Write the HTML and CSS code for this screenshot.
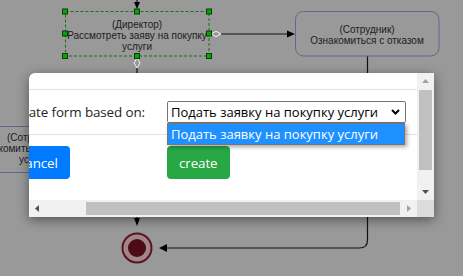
FILE: index.html
```html
<!DOCTYPE html>
<html lang="en">
<head>
    <meta charset="UTF-8">
    <title>Process editor</title>
    <link rel="stylesheet" href="styles.css">
</head>
<body>
    <svg class="diagram" width="463" height="276" viewBox="0 0 463 276">
        <g class="edges">
            <line x1="137" y1="0" x2="137" y2="4"/>
            <polygon class="head" points="134,2 140,2 137,9"/>

            <line x1="221" y1="34" x2="289" y2="34"/>
            <polygon class="hollow" points="211,34 216,31.3 221,34 216,36.7"/>
            <polygon class="head" points="287,30.5 295,34 287,37.5"/>

            <line x1="137" y1="68" x2="137" y2="73"/>
            <polygon class="hollow" points="137,58 140,63 137,68 134,63"/>

            <line x1="367.5" y1="56" x2="367.5" y2="73"/>
            <path d="M367.5 217 V240 Q367.5 248 359.5 248 H166"/>
            <polygon class="head" points="159,248 167,244 167,252"/>

            <line x1="137" y1="217" x2="137" y2="219"/>
            <polygon class="head" points="134,218 140,218 137,226"/>
        </g>

        <rect class="selected" x="65.5" y="11.5" width="143.5" height="44.5"/>
        <text class="label" x="137" y="27.5">(Директор)</text>
        <text class="label" x="137" y="38.5">Рассмотреть заяву на покупку</text>
        <text class="label" x="137" y="49.5">услуги</text>
        <g class="handles">
            <rect x="62.5" y="9" width="5" height="5"/>
            <rect x="134.5" y="9" width="5" height="5"/>
            <rect x="206.5" y="9" width="5" height="5"/>
            <rect x="62.5" y="31" width="5" height="5"/>
            <rect x="206.5" y="31" width="5" height="5"/>
            <rect x="62.5" y="53.5" width="5" height="5"/>
            <rect x="134.5" y="53.5" width="5" height="5"/>
            <rect x="206.5" y="53.5" width="5" height="5"/>
        </g>

        <rect class="task" x="295.5" y="11.5" width="143.5" height="44.5" rx="8"/>
        <text class="label" x="367" y="33">(Сотрудник)</text>
        <text class="label" x="367" y="44">Ознакомиться с отказом</text>

        <rect class="task" x="-60" y="126.5" width="130" height="46" rx="8"/>
        <text class="label start" x="7" y="141">(Сотрудник)</text>
        <text class="label start" x="-25" y="152">Ознакомиться с</text>
        <text class="label start" x="19" y="163">услуги</text>

        <circle class="end-ring" cx="137" cy="248" r="14.5"/>
        <circle class="end-dot" cx="137" cy="248" r="9"/>
    </svg>

    <div class="modal">
        <div class="modal-main">
            <div class="viewport">
                <div class="content">
                    <div class="modal-header"></div>
                    <div class="modal-body">
                        <div class="form-label"><label>Generate form based on:</label></div>
                        <div class="select-wrap">
                            <div class="select">
                                <span>Подать заявку на покупку услуги</span>
                                <svg class="chevron" width="9" height="6" viewBox="0 0 9 6">
                                    <path d="M1 1 L4.5 4.5 L8 1"/>
                                </svg>
                            </div>
                            <div class="dropdown">Подать заявку на покупку услуги</div>
                        </div>
                    </div>
                    <div class="modal-footer">
                        <button class="btn btn-cancel">cancel</button>
                        <button class="btn btn-create">create</button>
                    </div>
                </div>
            </div>
            <div class="vscroll">
                <svg class="arrow" width="17" height="17" viewBox="0 0 17 17"><polygon class="dim" points="5,10 12,10 8.5,6"/></svg>
                <div class="vtrack"><div class="vthumb"></div></div>
                <svg class="arrow" width="17" height="17" viewBox="0 0 17 17"><polygon points="5,7 12,7 8.5,11"/></svg>
            </div>
        </div>
        <div class="hscroll">
            <svg class="arrow" width="17" height="17" viewBox="0 0 17 17"><polygon points="10,5 10,12 6,8.5"/></svg>
            <div class="htrack"><div class="hthumb"></div></div>
            <svg class="arrow" width="17" height="17" viewBox="0 0 17 17"><polygon class="dim" points="7,5 7,12 11,8.5"/></svg>
            <div class="corner"></div>
        </div>
    </div>
</body>
</html>
```

FILE: styles.css
```css
body {
    margin: 0;
    width: 463px;
    height: 276px;
    overflow: hidden;
    background-color: #999999;
    font-family: "Open Sans", Arial, sans-serif;
}

.diagram {
    display: block;
}

.edges line,
.edges path {
    stroke: #111;
    stroke-width: 1.2;
    fill: none;
}

.edges .head {
    fill: #000;
}

.edges .hollow {
    fill: #999;
    stroke: #f2f2f2;
    stroke-width: 1;
}

.selected {
    fill: none;
    stroke: #1d6b1d;
    stroke-width: 1;
    stroke-dasharray: 3 2;
}

.task {
    fill: none;
    stroke: #5d6a88;
    stroke-width: 1;
}

.label {
    font-family: "Liberation Sans", Arial, sans-serif;
    font-size: 10px;
    fill: #1c1c1c;
    text-anchor: middle;
}

.label.start {
    text-anchor: start;
}

.handles rect {
    fill: #00a800;
    stroke: #0b3a0b;
    stroke-width: 1;
}

.end-ring {
    fill: #a0858b;
    stroke: #5a1322;
    stroke-width: 2;
}

.end-dot {
    fill: #4b0b17;
}

/* modal window */
.modal {
    position: absolute;
    left: 29px;
    top: 73px;
    width: 405px;
    height: 144px;
    display: flex;
    flex-direction: column;
    background-color: #fff;
    border-top-left-radius: 6px;
    box-shadow: 0 3px 12px rgba(0, 0, 0, 0.45);
}

.modal-main {
    flex: 1;
    display: flex;
    min-height: 0;
}

.viewport {
    flex: 1;
    overflow: hidden;
    position: relative;
}

.content {
    margin-left: -24px;
    width: 420px;
}

.modal-header {
    height: 16px;
    border-bottom: 1px solid #dee2e6;
}

.modal-body,
.modal-footer {
    display: grid;
    grid-template-columns: 162px 1fr;
    align-items: center;
}

.modal-body {
    height: 44px;
    border-bottom: 1px solid #dee2e6;
}

.modal-footer {
    padding-top: 11px;
    align-items: start;
}

.form-label {
    display: flex;
    justify-content: flex-end;
    padding-right: 22px;
    font-size: 13.4px;
    letter-spacing: -0.1px;
    color: #212529;
    white-space: nowrap;
}

.select-wrap {
    position: relative;
    width: 239px;
}

.select {
    height: 22px;
    box-sizing: border-box;
    border: 1px solid #767676;
    border-radius: 2px;
    padding: 0 5px 0 3px;
    display: flex;
    align-items: center;
    justify-content: space-between;
    font-size: 13px;
    color: #000;
    white-space: nowrap;
}

.chevron path {
    fill: none;
    stroke: #000;
    stroke-width: 2;
}

.dropdown {
    position: absolute;
    left: 0;
    top: 22px;
    width: 238px;
    height: 22px;
    box-sizing: border-box;
    padding-left: 3px;
    line-height: 20px;
    border: 1px solid #767676;
    background-color: #1e90ff;
    color: #fff;
    font-size: 13px;
    white-space: nowrap;
    box-shadow: 2px 2px 4px rgba(0, 0, 0, 0.35);
}

.btn {
    height: 33px;
    padding: 0 12px;
    border: none;
    border-radius: 4px;
    color: #fff;
    font-family: inherit;
    font-size: 13.4px;
    letter-spacing: -0.1px;
    justify-self: start;
}

.btn-cancel {
    background-color: #007bff;
    margin-left: 2px;
}

.btn-create {
    background-color: #28a745;
}

/* scrollbars */
.vscroll {
    width: 17px;
    display: flex;
    flex-direction: column;
    background-color: #f1f1f1;
}

.vtrack {
    flex: 1;
    padding: 0 2px;
}

.vthumb {
    height: 80px;
    background-color: #c1c1c1;
}

.hscroll {
    height: 17px;
    display: flex;
    background-color: #f1f1f1;
}

.htrack {
    flex: 1;
    padding: 2px 0;
    display: flex;
}

.hthumb {
    margin-left: 40px;
    flex: 1;
    background-color: #c1c1c1;
}

.arrow {
    display: block;
    flex: none;
}

.arrow polygon {
    fill: #505050;
}

.arrow polygon.dim {
    fill: #a3a3a3;
}

.corner {
    width: 17px;
    background-color: #dcdcdc;
}
```
